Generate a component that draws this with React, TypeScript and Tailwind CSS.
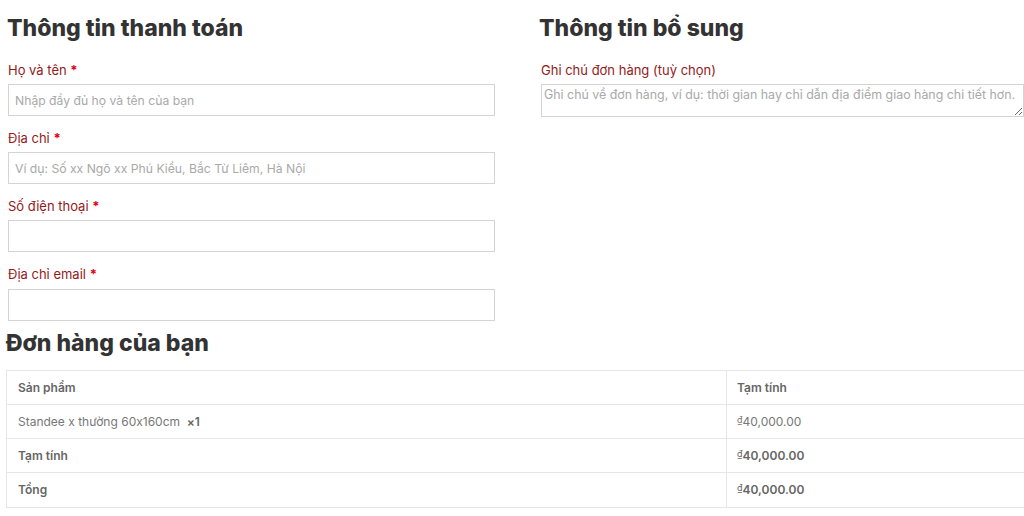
import React from 'react'

const font = "font-['Inter','Noto_Sans',sans-serif] [font-feature-settings:'calt'_0]"

function Field({ label, placeholder, gap = 4 }: { label: string; placeholder?: string; gap?: number }) {
  return (
    <div className="mb-[12px]">
      <label className="block h-[20px] text-[13px] leading-[20px] text-[#931a1a]">
        {label} <span className="font-bold text-[#e3000f]">*</span>
      </label>
      <input
        type="text"
        placeholder={placeholder}
        className={`${gap === 4 ? 'mt-[4px]' : 'mt-[5px]'} block h-[32px] w-[487px] border border-[#d4d4d4] bg-white px-[6px] text-[12.2px] text-[#555] outline-none placeholder:text-[#a9a9a9]`}
      />
    </div>
  )
}

export default function App() {
  return (
    <div className={`h-[516px] w-[1024px] overflow-hidden bg-white ${font}`}>
      <div className="flex pl-[8px] pt-[14px]">
        <div className="w-[487px]">
          <h3 className="-ml-[1px] mb-[18px] h-[28px] text-[23px] font-extrabold leading-[28px] text-[#333]">
            Thông tin thanh toán
          </h3>
          <Field label="Họ và tên" placeholder="Nhập đầy đủ họ và tên của bạn" />
          <Field label="Địa chỉ" placeholder="Ví dụ: Số xx Ngõ xx Phú Kiều, Bắc Từ Liêm, Hà Nội" />
          <Field label="Số điện thoại" />
          <Field label="Địa chỉ email" gap={5} />
        </div>
        <div className="ml-[46px] w-[483px]">
          <h3 className="-ml-[2px] mb-[18px] h-[28px] text-[23px] font-extrabold leading-[28px] text-[#333]">
            Thông tin bổ sung
          </h3>
          <label className="block h-[20px] text-[13px] leading-[20px] text-[#931a1a]">
            Ghi chú đơn hàng (tuỳ chọn)
          </label>
          <textarea
            placeholder="Ghi chú về đơn hàng, ví dụ: thời gian hay chỉ dẫn địa điểm giao hàng chi tiết hơn."
            className="mt-[4px] block h-[33px] w-[483px] border border-[#d4d4d4] px-[2px] py-[1px] text-[12.4px] leading-[18px] outline-none placeholder:text-[#a9a9a9]"
          />
        </div>
      </div>

      <div className="pl-[6px]">
        <h3 className="mb-[13px] mt-[-4px] h-[28px] text-[23px] font-extrabold leading-[28px] text-[#333]">
          Đơn hàng của bạn
        </h3>
        <table className="w-[1100px] border-collapse border border-[#e6e6e6] text-[12px] text-[#777]">
          <tbody>
            <tr className="h-[34px]">
              <th className="w-[720px] border border-[#e6e6e6] px-[11px] text-left font-semibold text-[#666]">Sản phẩm</th>
              <th className="border border-[#e6e6e6] px-[10px] text-left font-semibold text-[#666]">Tạm tính</th>
            </tr>
            <tr className="h-[34px]">
              <td className="border border-[#e6e6e6] px-[11px]">
                Standee x thường 60x160cm&nbsp; <strong className="font-semibold text-[#666]">×1</strong>
              </td>
              <td className="border border-[#e6e6e6] px-[10px]">
                <span className="align-top text-[9px]">₫</span>40,000.00
              </td>
            </tr>
            <tr className="h-[34px]">
              <th className="border border-[#e6e6e6] px-[11px] text-left font-semibold text-[#666]">Tạm tính</th>
              <td className="border border-[#e6e6e6] px-[10px] font-semibold text-[#666]">
                <span className="align-top text-[9px] font-normal">₫</span>40,000.00
              </td>
            </tr>
            <tr className="h-[35px]">
              <th className="border border-[#e6e6e6] px-[11px] text-left font-semibold text-[#666]">Tổng</th>
              <td className="border border-[#e6e6e6] px-[10px] font-semibold text-[#666]">
                <span className="align-top text-[9px] font-normal">₫</span>40,000.00
              </td>
            </tr>
          </tbody>
        </table>
      </div>
    </div>
  )
}
